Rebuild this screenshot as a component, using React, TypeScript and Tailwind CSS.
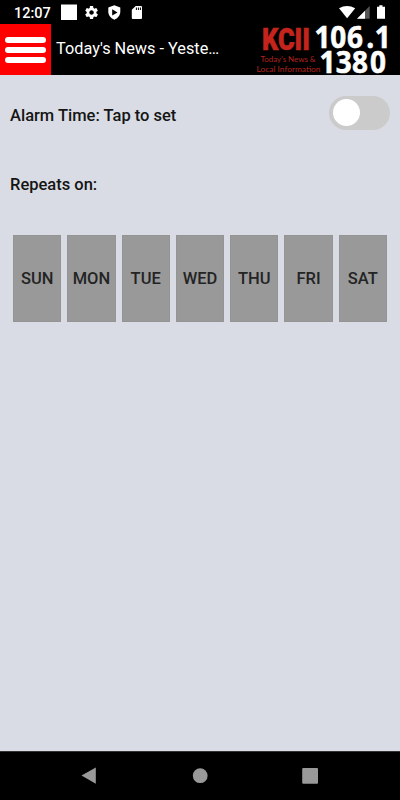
import React from 'react';

const days = ['SUN', 'MON', 'TUE', 'WED', 'THU', 'FRI', 'SAT'];

const StatusBar = () => {
  return (
    <div className="h-6 flex items-center bg-black text-white">
      <span className="ml-[14px] w-[47px] text-[14.5px] leading-6 font-medium pt-[3px]">12:07</span>
      <svg width="84" height="24" viewBox="61 0 84 24" fill="#fff">
        <rect x="61" y="4.5" width="16" height="15.5" />
        <g transform="translate(83.8 4.8) scale(0.645)">
          <path d="M19.43 12.98c.04-.32.07-.64.07-.98s-.03-.66-.07-.98l2.11-1.65c.19-.15.24-.42.12-.64l-2-3.46c-.12-.22-.39-.3-.61-.22l-2.49 1c-.52-.4-1.08-.73-1.69-.98l-.38-2.65C14.46 2.18 14.25 2 14 2h-4c-.25 0-.46.18-.49.42l-.38 2.65c-.61.25-1.17.59-1.69.98l-2.49-1c-.23-.09-.49 0-.61.22l-2 3.46c-.13.22-.07.49.12.64l2.11 1.65c-.04.32-.07.65-.07.98s.03.66.07.98l-2.11 1.65c-.19.15-.24.42-.12.64l2 3.46c.12.22.39.3.61.22l2.49-1c.52.4 1.08.73 1.69.98l.38 2.65c.03.24.24.42.49.42h4c.25 0 .46-.18.49-.42l.38-2.65c.61-.25 1.17-.59 1.69-.98l2.49 1c.23.09.49 0 .61-.22l2-3.46c.12-.22.07-.49-.12-.64l-2.11-1.65zM12 15.5c-1.93 0-3.5-1.57-3.5-3.5s1.57-3.5 3.5-3.5 3.5 1.57 3.5 3.5-1.57 3.5-3.5 3.5z" />
        </g>
        <path d="M114.3 5.2l6 2.4v4.2c0 3.6-2.6 6.6-6 7.9-3.4-1.3-6-4.3-6-7.9V7.6z" />
        <path d="M112.2 9.3v6.3l5.3-3.15z" fill="#000" />
        <path d="M135.7 6h5.3q1 0 1 1v11q0 1-1 1h-8.2q-1 0-1-1v-8.2z" />
        <path d="M135.9 7.5h1v2.5h-1zM137.9 7.5h1v2.5h-1zM139.9 7.5h1v2.5h-1z" fill="#000" />
      </svg>
      <svg className="ml-auto" width="61" height="24" viewBox="339 0 61 24" fill="#fff">
        <path d="M339 8.3q8-4.8 16.2 0L347.1 18.3z" />
        <path d="M369.7 6v12.7H357z" fill="#555" />
        <path d="M365 10.7v8h-8z" />
        <path d="M379.3 5.2h3.2v1.5h2.5v12.1h-8V6.7h2.3z" />
      </svg>
    </div>
  );
};

const StationLogo = () => {
  return (
    <svg
      className="ml-auto overflow-visible"
      width="150"
      height="51"
      viewBox="250 24 150 51"
      fontFamily="'Open Sans', sans-serif"
    >
      <text x="262" y="50" fontFamily="Roboto, sans-serif" fontSize="31" fontWeight="900" fill="#c4241c" stroke="#c4241c" strokeWidth="0.6" textLength="48" lengthAdjust="spacingAndGlyphs">KCII</text>
      <g fontSize="31" fontWeight="700" fill="#fff" stroke="#fff" strokeWidth="0.6">
        <text transform="translate(314.5 48.3) scale(0.9 1)" x="0 17.5 36 57.5 67" y="0">106.1</text>
        <text transform="translate(319.5 73.2) scale(0.9 1)" x="0 18 36 56" y="0">1380</text>
      </g>
      <g fontFamily="Lato, sans-serif" fontSize="8" fill="#b3241d">
        <text x="260.5" y="62" textLength="55" lengthAdjust="spacingAndGlyphs">Today's News &amp;</text>
        <text x="256.5" y="71.5" textLength="64" lengthAdjust="spacingAndGlyphs">Local Information</text>
      </g>
    </svg>
  );
};

const Header = () => {
  return (
    <header className="h-[51px] flex items-center bg-black text-white">
      <button aria-label="Menu" className="w-[51px] h-[51px] shrink-0 flex flex-col items-center pt-[13px] gap-1 bg-[#ff0000]">
        <span className="w-[41px] h-1.5 rounded-full bg-white" />
        <span className="w-[41px] h-1.5 rounded-full bg-white" />
        <span className="w-[41px] h-1.5 rounded-full bg-white" />
      </button>
      <h1 className="ml-[5px] pb-px text-[16.3px] leading-5 whitespace-nowrap">Today's News - Yeste…</h1>
      <StationLogo />
    </header>
  );
};

const App = () => {
  return (
    <div className="w-[400px] h-[800px] flex flex-col overflow-hidden bg-[#d9dce4] font-['Roboto',sans-serif]">
      <StatusBar />
      <Header />

      <main className="flex-1 flex flex-col text-[#151515]">
        <div className="mt-5 h-[35px] px-[10px] flex items-center justify-between">
          <p className="text-[16.5px] leading-5 font-medium pt-[6px]">Alarm Time: Tap to set</p>
          <button
            role="switch"
            aria-checked="false"
            aria-label="Alarm"
            className="w-[61px] h-[34px] pl-1 flex items-center rounded-full bg-[#cbcbcb]"
          >
            <span className="size-[27px] rounded-full bg-white" />
          </button>
        </div>

        <p className="mt-[45px] ml-[10px] text-[16.5px] leading-5 font-medium">Repeats on:</p>

        <div className="mt-[40px] px-[13px] flex gap-[6px]">
          {days.map((day) => (
            <button key={day} className="flex-1 basis-0 min-w-0 h-[87px] pt-0.5 flex items-center justify-center bg-[#999999] border border-[#949494] text-[16.5px] font-medium text-[#242424]">
              {day}
            </button>
          ))}
        </div>
      </main>

      <nav className="h-[49px] bg-black border-t border-[#333333]">
        <svg width="400" height="48" viewBox="0 752 400 48" fill="#999">
          <path d="M81.5 775.5L95.8 767.5v16.3z" />
          <circle cx="200.2" cy="775.7" r="7.4" />
          <rect x="302.2" y="768" width="15.8" height="15.7" rx="1" />
        </svg>
      </nav>
    </div>
  );
};

export default App;
